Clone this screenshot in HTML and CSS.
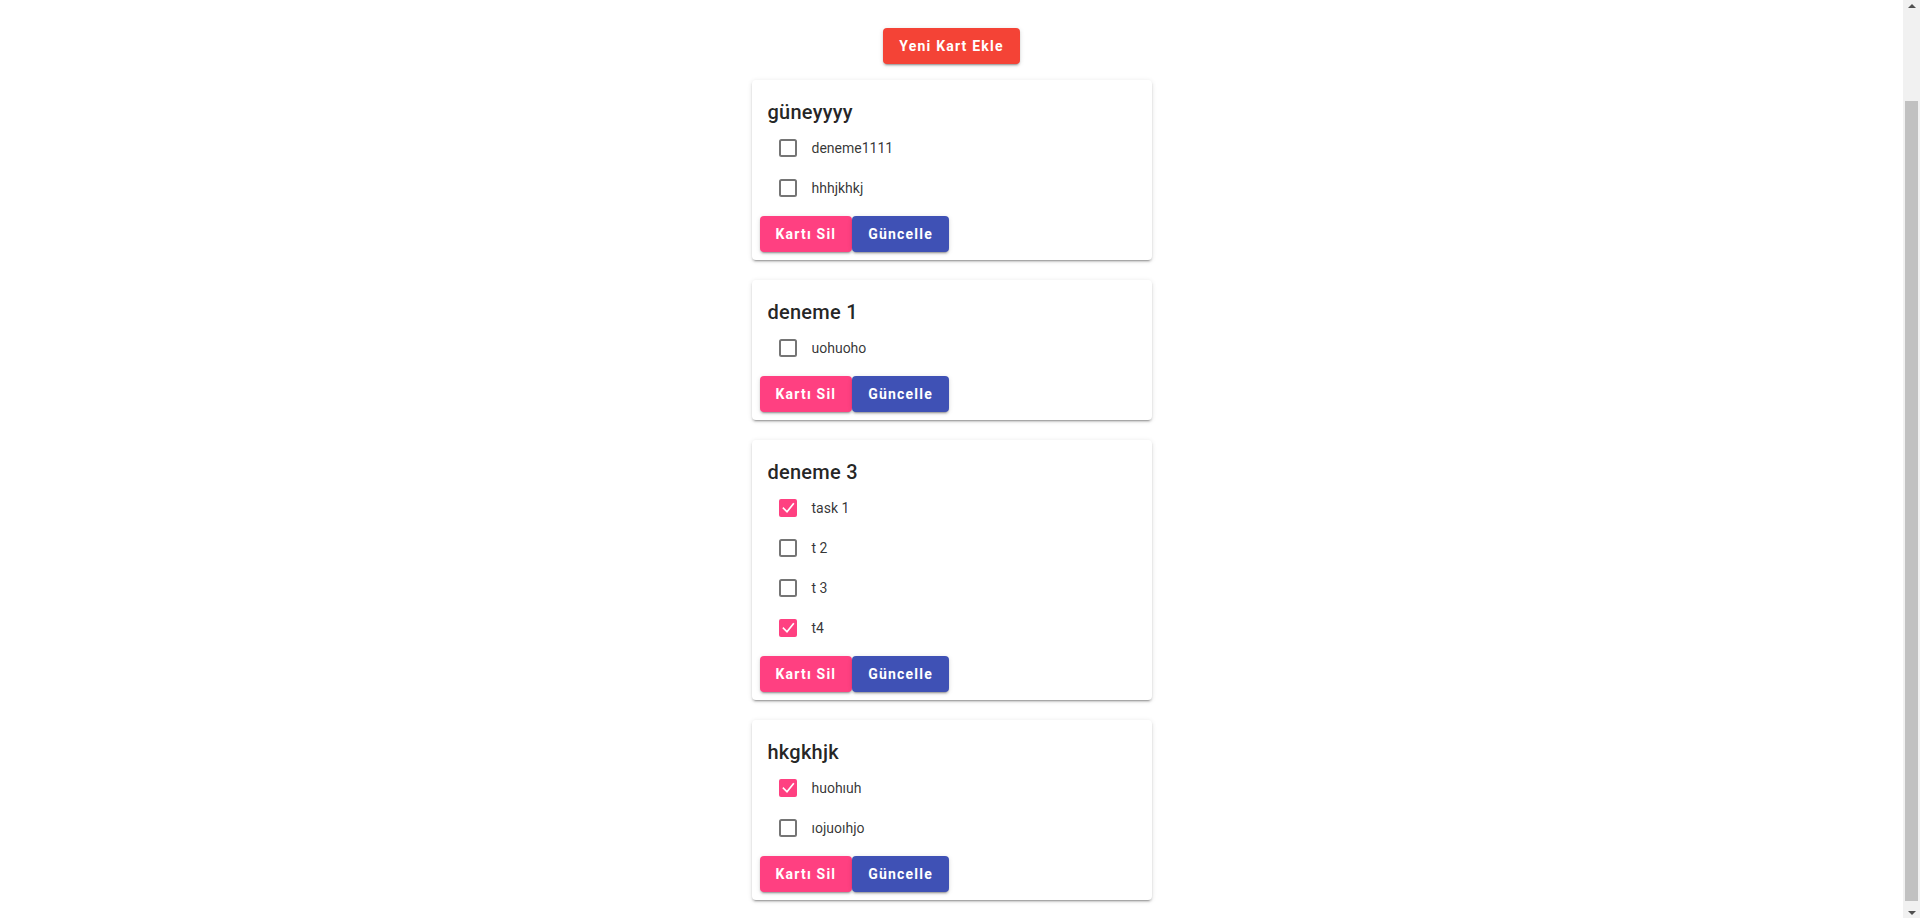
FILE: index.html
```html
<!DOCTYPE html>
<html lang="tr">
<head>
<meta charset="utf-8">
<title>Kartlar</title>
<link rel="stylesheet" href="styles.css">
</head>
<body>
<main class="page">
  <button class="btn btn-red add-btn">Yeni Kart Ekle</button>
  <div class="cards">
    <section class="card">
      <h2 class="card-title">güneyyyy</h2>
      <ul class="tasks">
        <li class="task"><svg class="cb" viewBox="0 0 18 18"><rect class="cb-off" x="1" y="1" width="16" height="16" rx="1.5"/></svg><span class="task-label">deneme1111</span></li>
        <li class="task"><svg class="cb" viewBox="0 0 18 18"><rect class="cb-off" x="1" y="1" width="16" height="16" rx="1.5"/></svg><span class="task-label">hhhjkhkj</span></li>
      </ul>
      <div class="actions"><button class="btn btn-pink">Kartı Sil</button><button class="btn btn-blue">Güncelle</button></div>
    </section>
    <section class="card">
      <h2 class="card-title">deneme 1</h2>
      <ul class="tasks">
        <li class="task"><svg class="cb" viewBox="0 0 18 18"><rect class="cb-off" x="1" y="1" width="16" height="16" rx="1.5"/></svg><span class="task-label">uohuoho</span></li>
      </ul>
      <div class="actions"><button class="btn btn-pink">Kartı Sil</button><button class="btn btn-blue">Güncelle</button></div>
    </section>
    <section class="card">
      <h2 class="card-title">deneme 3</h2>
      <ul class="tasks">
        <li class="task"><svg class="cb" viewBox="0 0 18 18"><rect class="cb-on" x="0" y="0" width="18" height="18" rx="2"/><polyline class="cb-check" points="4.5,9.3 8,12.8 14.3,5"/></svg><span class="task-label">task 1</span></li>
        <li class="task"><svg class="cb" viewBox="0 0 18 18"><rect class="cb-off" x="1" y="1" width="16" height="16" rx="1.5"/></svg><span class="task-label">t 2</span></li>
        <li class="task"><svg class="cb" viewBox="0 0 18 18"><rect class="cb-off" x="1" y="1" width="16" height="16" rx="1.5"/></svg><span class="task-label">t 3</span></li>
        <li class="task"><svg class="cb" viewBox="0 0 18 18"><rect class="cb-on" x="0" y="0" width="18" height="18" rx="2"/><polyline class="cb-check" points="4.5,9.3 8,12.8 14.3,5"/></svg><span class="task-label">t4</span></li>
      </ul>
      <div class="actions"><button class="btn btn-pink">Kartı Sil</button><button class="btn btn-blue">Güncelle</button></div>
    </section>
    <section class="card">
      <h2 class="card-title">hkgkhjk</h2>
      <ul class="tasks">
        <li class="task"><svg class="cb" viewBox="0 0 18 18"><rect class="cb-on" x="0" y="0" width="18" height="18" rx="2"/><polyline class="cb-check" points="4.5,9.3 8,12.8 14.3,5"/></svg><span class="task-label">huohıuh</span></li>
        <li class="task"><svg class="cb" viewBox="0 0 18 18"><rect class="cb-off" x="1" y="1" width="16" height="16" rx="1.5"/></svg><span class="task-label">ıojuoıhjo</span></li>
      </ul>
      <div class="actions"><button class="btn btn-pink">Kartı Sil</button><button class="btn btn-blue">Güncelle</button></div>
    </section>
  </div>
</main>
<div class="scrollbar" aria-hidden="true">
  <div class="sb-btn"><span class="sb-arrow-up"></span></div>
  <div class="sb-track"><div class="sb-thumb"></div></div>
  <div class="sb-btn"><span class="sb-arrow-down"></span></div>
</div>
</body>
</html>
```

FILE: styles.css
```css
* { box-sizing: border-box; }

html, body {
  margin: 0;
  padding: 0;
  height: 100%;
  overflow: hidden;
  background: #ffffff;
  font-family: Roboto, "Liberation Sans", Arial, sans-serif;
  color: rgba(0, 0, 0, 0.87);
}

body {
  display: flex;
}

.page {
  flex: 1;
  display: flex;
  flex-direction: column;
  align-items: center;
  padding: 28px 0 18px;
}

.btn {
  height: 36px;
  padding: 0 16px;
  border: none;
  border-radius: 4px;
  font-family: Roboto, "Liberation Sans", Arial, sans-serif;
  font-size: 14px;
  font-weight: 700;
  letter-spacing: 1.2px;
  white-space: nowrap;
  color: #ffffff;
  cursor: pointer;
  box-shadow: 0 3px 1px -2px rgba(0,0,0,.2), 0 2px 2px 0 rgba(0,0,0,.14), 0 1px 5px 0 rgba(0,0,0,.12);
}

.btn-red { background: #f44336; }
.btn-pink { background: #ff4081; }
.btn-blue { background: #3f51b5; }

.add-btn {
  margin-bottom: 16px;
}

.cards {
  display: flex;
  flex-direction: column;
  gap: 20px;
}

.card {
  width: 400px;
  background: #fff;
  border-radius: 4px;
  box-shadow: 0 3px 1px -2px rgba(0,0,0,.2), 0 2px 2px 0 rgba(0,0,0,.14), 0 1px 5px 0 rgba(0,0,0,.12);
}

.card-title {
  margin: 0;
  padding: 16px 16px 0;
  font-size: 20px;
  font-weight: 500;
  line-height: 32px;
  letter-spacing: 0.25px;
  color: rgba(0, 0, 0, 0.87);
}

.tasks {
  list-style: none;
  margin: 0;
  padding: 0;
}

.task {
  height: 40px;
  display: flex;
  align-items: center;
  padding-left: 27px;
}

.cb {
  width: 18px;
  height: 18px;
  flex-shrink: 0;
}

.cb-off {
  fill: none;
  stroke: #757575;
  stroke-width: 2;
}

.cb-on { fill: #ff4081; }

.cb-check {
  fill: none;
  stroke: #ffffff;
  stroke-width: 1.7;
  stroke-linecap: square;
}

.task-label {
  margin-left: 15px;
  font-size: 14px;
  line-height: 20px;
  color: rgba(0, 0, 0, 0.8);
}

.actions {
  display: flex;
  padding: 8px;
}

/* classic browser scrollbar, as seen in the screenshot */
.scrollbar {
  width: 17px;
  height: 100vh;
  flex-shrink: 0;
  display: flex;
  flex-direction: column;
  background: #f1f1f1;
}

.sb-btn {
  height: 17px;
  display: flex;
  align-items: center;
  justify-content: center;
}

.sb-arrow-up {
  width: 0;
  height: 0;
  border-left: 4px solid transparent;
  border-right: 4px solid transparent;
  border-bottom: 4px solid #505050;
  margin-bottom: 6px;
}

.sb-arrow-down {
  width: 0;
  height: 0;
  border-left: 4px solid transparent;
  border-right: 4px solid transparent;
  border-top: 4px solid #505050;
  margin-top: 6px;
}

.sb-track {
  flex: 1;
  display: flex;
  flex-direction: column;
  justify-content: flex-end;
  padding: 0 2px;
}

.sb-thumb {
  height: 800px;
  background: #c1c1c1;
}
```
